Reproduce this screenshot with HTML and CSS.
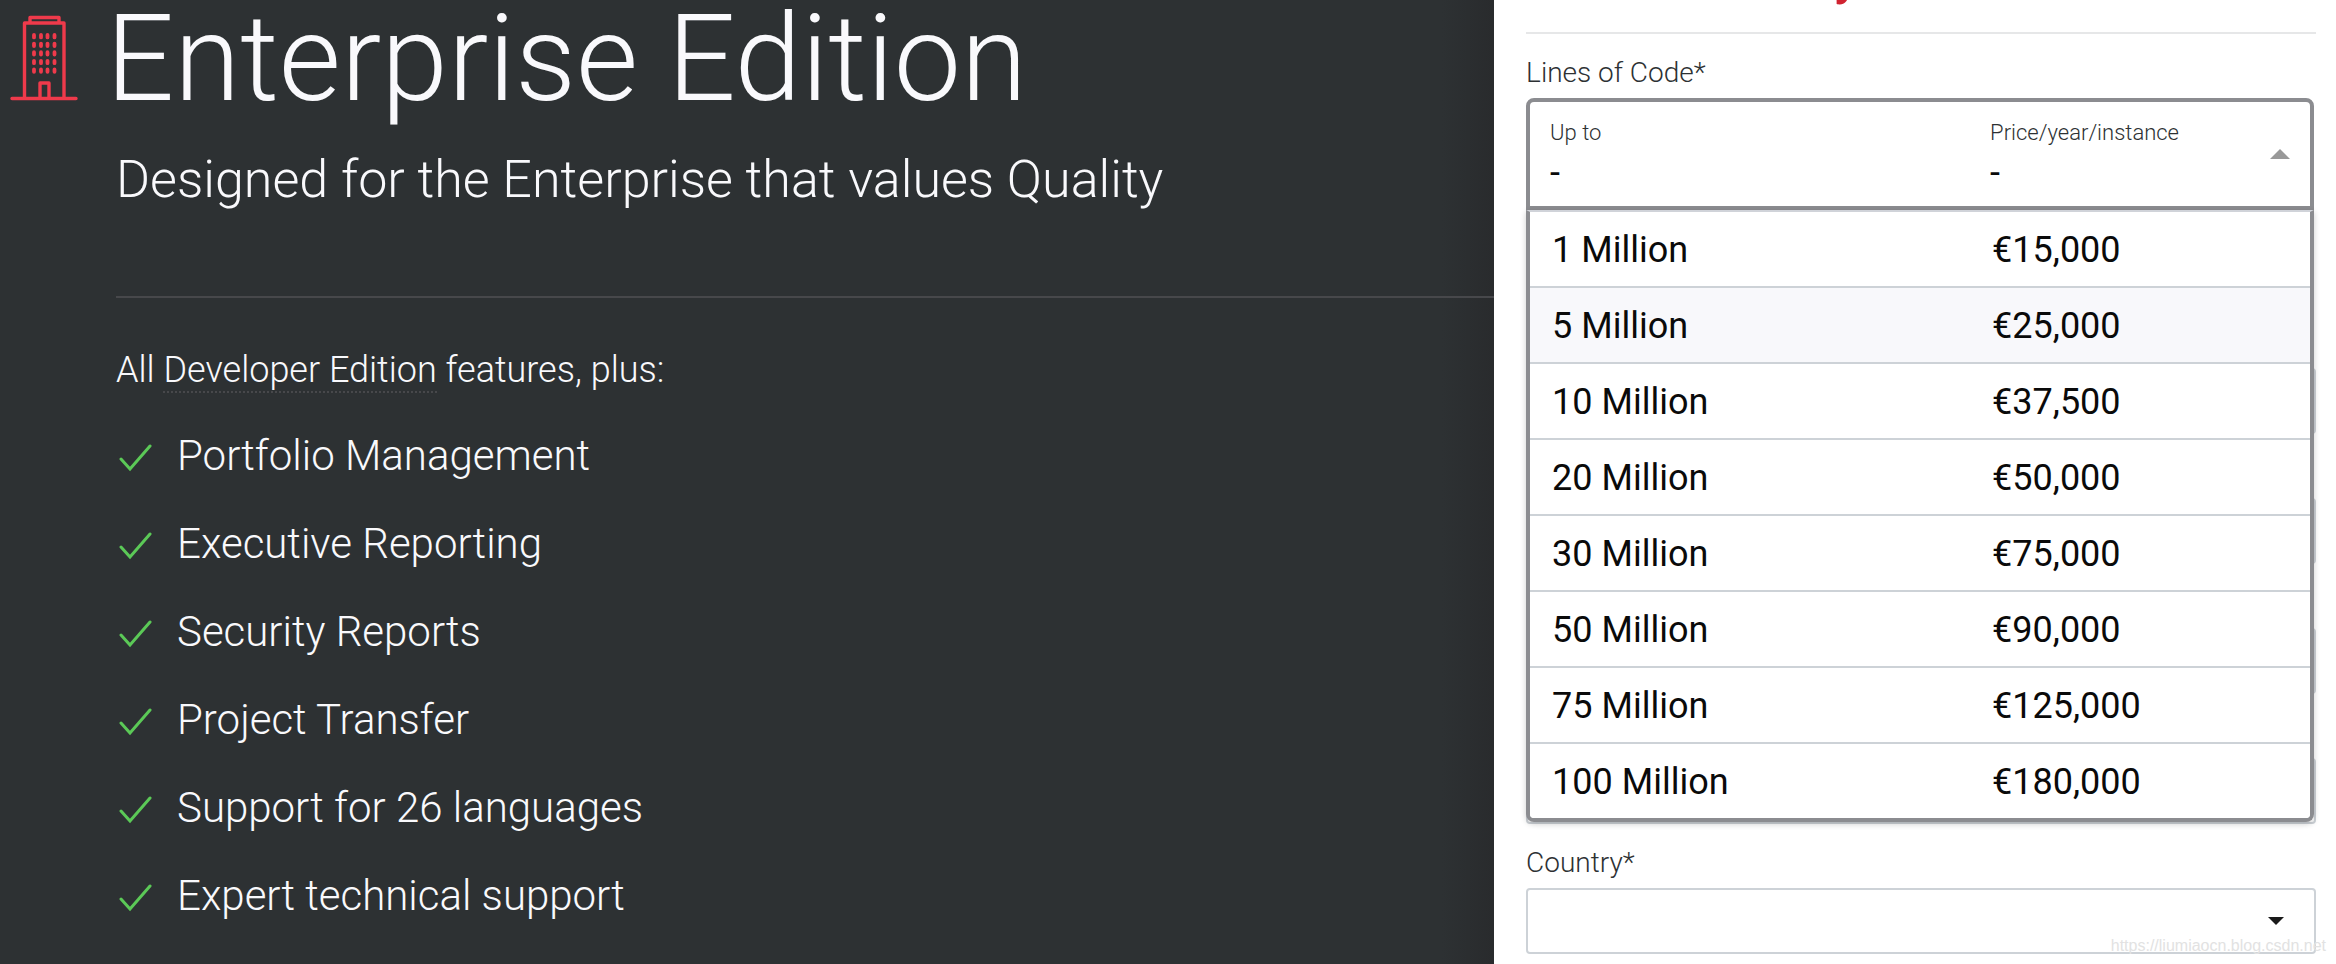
FILE: index.html
```html
<!DOCTYPE html>
<html lang="en">
<head>
<meta charset="utf-8">
<title>Enterprise Edition</title>
<link rel="stylesheet" href="styles.css">
</head>
<body>
<div class="page">
  <main class="intro">
    <svg class="building" viewBox="0 0 68 86" fill="none" stroke="#ef3a4b" stroke-width="3.400" stroke-linecap="round" stroke-linejoin="round" aria-hidden="true">
      <path d="M2 83.500H66M14.500 83V8H54V83M20 8V2.500H49V8M30 83V68H39V83"/>
      <path stroke-width="3.800" stroke-dasharray="2.400 6.200" d="M24 20V58M31 20V58M37.500 20V58M44.500 20V58"/>
    </svg>
    <div class="copy">
      <h1>Enterprise Edition</h1>
      <p class="tagline">Designed for the Enterprise that values Quality</p>
      <hr class="rule">
      <p class="lead">All <a class="edition" href="#">Developer Edition</a> features, plus:</p>
      <ul class="features">
        <li><svg class="tick" viewBox="0 0 34 30" aria-hidden="true"><path d="M2 16L11 26L31 3"/></svg>Portfolio Management</li>
        <li><svg class="tick" viewBox="0 0 34 30" aria-hidden="true"><path d="M2 16L11 26L31 3"/></svg>Executive Reporting</li>
        <li><svg class="tick" viewBox="0 0 34 30" aria-hidden="true"><path d="M2 16L11 26L31 3"/></svg>Security Reports</li>
        <li><svg class="tick" viewBox="0 0 34 30" aria-hidden="true"><path d="M2 16L11 26L31 3"/></svg>Project Transfer</li>
        <li><svg class="tick" viewBox="0 0 34 30" aria-hidden="true"><path d="M2 16L11 26L31 3"/></svg>Support for 26 languages</li>
        <li><svg class="tick" viewBox="0 0 34 30" aria-hidden="true"><path d="M2 16L11 26L31 3"/></svg>Expert technical support</li>
      </ul>
    </div>
  </main>
  <form class="panel">
    <div class="heading"><h2>y</h2></div>
    <div class="field">
      <label for="lines" class="label">Lines of Code*</label>
      <div class="picker">
        <button type="button" id="lines" class="picker-button" aria-haspopup="listbox" aria-expanded="true">
          <span class="cell"><span class="caption">Up to</span><span class="value">-</span></span>
          <span class="cell"><span class="caption">Price/year/instance</span><span class="value">-</span></span>
          <svg class="arrow-up" viewBox="0 0 20 10" aria-hidden="true"><path d="M0 10L10 0L20 10Z"/></svg>
        </button>
        <div class="menu" role="listbox" aria-labelledby="lines">
          <button type="button" class="option" role="option"><span>1 Million</span><span>€15,000</span></button>
          <button type="button" class="option hovered" role="option"><span>5 Million</span><span>€25,000</span></button>
          <button type="button" class="option" role="option"><span>10 Million</span><span>€37,500</span></button>
          <button type="button" class="option" role="option"><span>20 Million</span><span>€50,000</span></button>
          <button type="button" class="option" role="option"><span>30 Million</span><span>€75,000</span></button>
          <button type="button" class="option" role="option"><span>50 Million</span><span>€90,000</span></button>
          <button type="button" class="option" role="option"><span>75 Million</span><span>€125,000</span></button>
          <button type="button" class="option" role="option"><span>100 Million</span><span>€180,000</span></button>
        </div>
      </div>
    </div>
    <div class="covered">
      <div class="box"></div>
      <div class="box"></div>
      <div class="box"></div>
      <div class="box"></div>
    </div>
    <div class="field">
      <label for="country" class="label">Country*</label>
      <div class="select-wrap">
        <select id="country" class="box"><option></option></select>
        <svg class="arrow-down" viewBox="0 0 16 8" aria-hidden="true"><path d="M0 0H16L8 8Z"/></svg>
      </div>
    </div>
  </form>
  <span class="watermark">https://liumiaocn.blog.csdn.net</span>
</div>
</body>
</html>
```
FILE: styles.css
```css
* {
  box-sizing: border-box;
}

body {
  margin: 0;
  font-family: Roboto, "Liberation Sans", sans-serif;
  font-weight: 300;
  background: #2d3133;
}

h1, h2, p, ul {
  margin: 0;
  padding: 0;
  font-weight: 300;
}

.page {
  position: relative;
  display: flex;
  min-height: 100vh;
  overflow: hidden;
}

.intro {
  flex: 1;
  display: flex;
  padding-left: 10px;
  color: #f9f9fc;
  background: linear-gradient(to left, #292b2d 0, #2d3133 52px);
}

.building {
  flex: none;
  width: 68px;
  height: 86px;
  margin-top: 15px;
}

.copy {
  flex: 1;
  padding-left: 38px;
}

h1 {
  margin-left: -10px;
  font-size: 120px;
  line-height: 118px;
}

.tagline {
  margin-top: 30px;
  font-size: 52px;
  line-height: 64px;
}

.rule {
  margin: 84px 0 0;
  border: 0;
  border-top: 2px solid #47484b;
}

.lead {
  margin-top: 48px;
  font-size: 36px;
  line-height: 48px;
}

.edition {
  color: inherit;
  text-decoration: none;
  border-bottom: 2px dotted #47484b;
}

.features {
  margin-top: 17px;
  list-style: none;
}

.features li {
  display: flex;
  align-items: center;
  height: 88px;
  font-size: 42px;
}

.tick {
  width: 34px;
  height: 30px;
  margin: 6px 24px 0 3px;
  fill: none;
  stroke: #5bc957;
  stroke-width: 3;
  stroke-linecap: round;
}

.panel {
  width: 36.04%;
  padding: 0 20px 10px 32px;
  background: #fff;
  color: #2d3133;
}

.heading {
  display: flex;
  align-items: flex-end;
  height: 34px;
  padding: 0 0 30px 308px;
  border-bottom: 2px solid #e6e7e8;
  overflow: hidden;
}

h2 {
  font-size: 52px;
  line-height: 52px;
  font-weight: 500;
  color: #d02330;
}

.label {
  display: block;
  font-size: 28px;
  line-height: 36px;
}

.heading + .field {
  padding-top: 21px;
}

.field .label {
  margin-bottom: 7px;
}

.picker {
  position: relative;
  margin-right: 2px;
}

.picker-button {
  display: grid;
  grid-template-columns: 440px 1fr 20px;
  align-items: center;
  width: 100%;
  height: 112px;
  padding: 0 20px;
  border: 4px solid #8b8c90;
  border-radius: 8px 8px 0 0;
  background: #fff;
  color: inherit;
  font: inherit;
  text-align: left;
}

.cell {
  padding-top: 6px;
}

.caption, .value {
  display: block;
}

.caption {
  font-size: 22px;
  line-height: 28px;
}

.value {
  margin-top: 4px;
  font-size: 36px;
  line-height: 44px;
  font-weight: 400;
  color: #0a0a0a;
}

.arrow-up {
  width: 20px;
  height: 10px;
  fill: #999;
}

.menu {
  position: absolute;
  z-index: 1;
  top: 100%;
  left: 0;
  right: 0;
  border: 4px solid #8b8c90;
  border-top: 2px solid #d0d3d9;
  border-radius: 0 0 8px 8px;
  background: #fff;
  box-shadow: 0 2px 6px rgba(0, 0, 0, 0.2);
  overflow: hidden;
}

.option {
  display: grid;
  grid-template-columns: 440px 1fr;
  align-items: center;
  width: 100%;
  height: 76px;
  padding: 2px 22px 0;
  border: 0;
  border-bottom: 2px solid #cdd2d7;
  background: #fff;
  color: #0a0a0a;
  font: 400 36px Roboto, "Liberation Sans", sans-serif;
  text-align: left;
}

.option:last-child {
  height: 74px;
  border-bottom: 0;
}

.hovered {
  background: #f8f8fb;
}

.box {
  display: block;
  width: 100%;
  height: 66px;
  border: 2px solid #cdd2d7;
  border-radius: 4px;
  background: #fff;
  appearance: none;
}

.covered {
  display: grid;
  gap: 64px;
  padding: 158px 0 21px;
}

.select-wrap {
  display: grid;
  align-items: center;
}

.select-wrap > * {
  grid-area: 1 / 1;
}

.arrow-down {
  justify-self: end;
  width: 16px;
  height: 8px;
  margin-right: 32px;
  fill: #1a1a1a;
  pointer-events: none;
}

.watermark {
  position: absolute;
  right: 10px;
  bottom: 8px;
  font: 16px/20px "Liberation Sans", sans-serif;
  color: #e2e2e2;
}
```
